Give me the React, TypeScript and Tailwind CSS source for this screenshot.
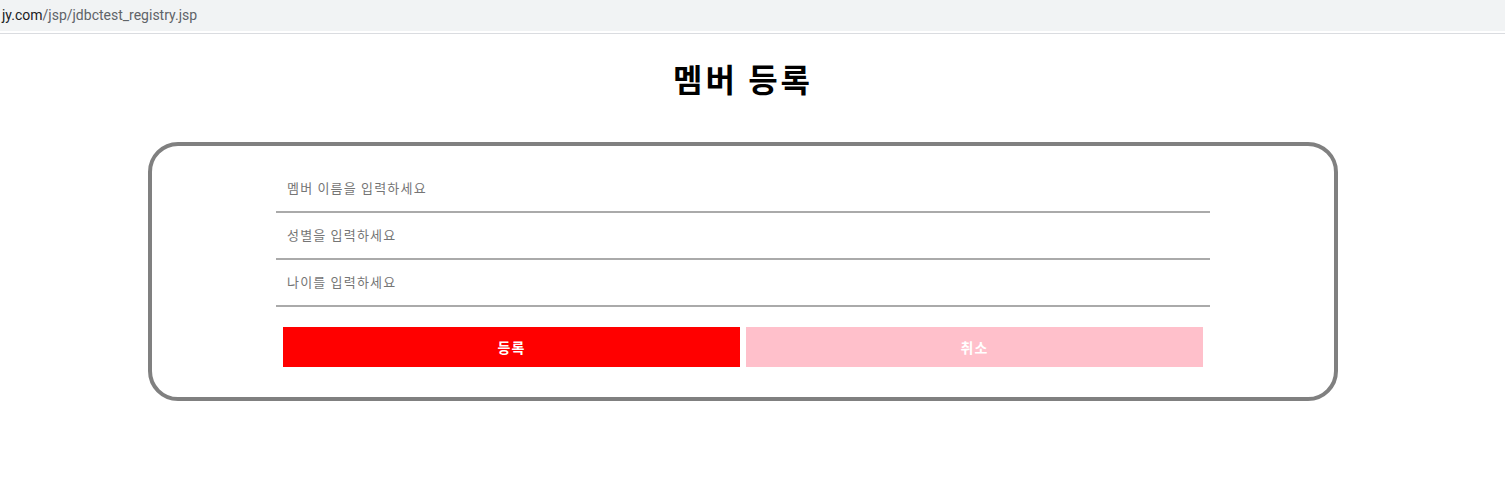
import React from 'react';

const kr = "font-['Noto_Sans_CJK_KR','Malgun_Gothic',sans-serif]";

const fields = ['멤버 이름을 입력하세요', '성별을 입력하세요', '나이를 입력하세요'];

export default function App() {
  return (
    <div className="min-h-[500px] bg-white">
      {/* address bar strip */}
      <div className="h-[31px] bg-[#f1f3f4] flex items-center pl-[2px] font-['Roboto',sans-serif] text-[14px]">
        <span className="text-[#202124]">jy.com</span>
        <span className="text-[#5f6368]">/jsp/jdbctest_registry.jsp</span>
      </div>
      <div className="h-[2px] bg-white" />
      <div className="h-px bg-[#dadce0]" />

      <div className={`w-[1486px] ${kr}`}>
        <h1 className="mt-[24px] text-center text-[32px] leading-[40px] font-bold tracking-[3px] text-black">멤버 등록</h1>

        <form
          className="mt-[44px] mx-auto w-[1190px] border-4 border-[#808080] rounded-[30px] pt-[20px] pb-[30px]"
          onSubmit={(e) => e.preventDefault()}
        >
          <div className="w-[934px] mx-auto flex flex-col">
            {fields.map((f) => (
              <input
                key={f}
                type="text"
                placeholder={f}
                className="h-[47px] border-b-2 border-[#aaaaaa] pl-[11px] pb-[3px] text-[13px] tracking-[1.2px] text-black placeholder:text-[#757575] outline-none"
              />
            ))}
          </div>
          <div className="w-[920px] mx-auto mt-[20px] flex gap-[6px]">
            <button type="submit" className="flex-1 h-[40px] bg-[#ff0000] text-white text-[14px] tracking-[1px] font-bold">
              등록
            </button>
            <button type="button" className="flex-1 h-[40px] bg-[#ffc0cb] text-white text-[14px] tracking-[1px] font-bold">
              취소
            </button>
          </div>
        </form>
      </div>
    </div>
  );
}
